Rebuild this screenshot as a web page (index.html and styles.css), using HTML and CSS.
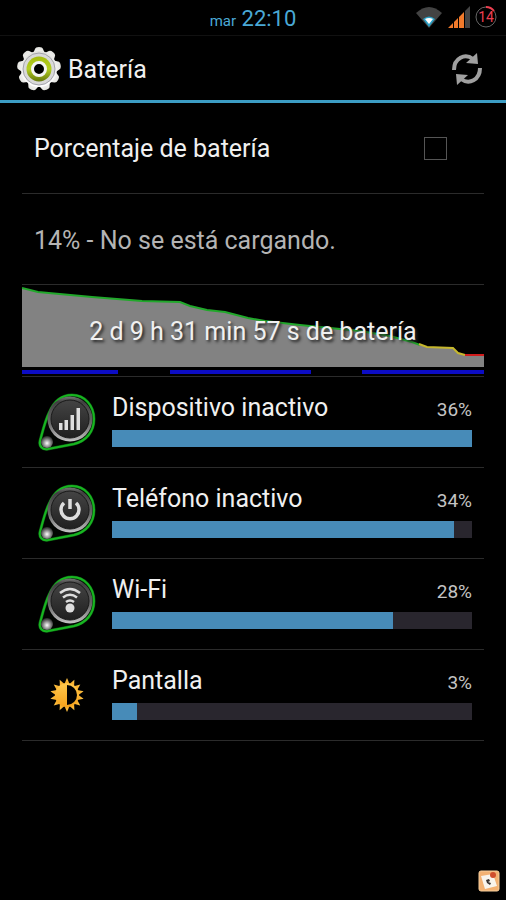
FILE: index.html
```html
<!DOCTYPE html>
<html lang="es">
<head>
<meta charset="utf-8">
<meta name="viewport" content="width=device-width, initial-scale=1">
<title>Batería</title>
<link rel="stylesheet" href="styles.css">
</head>
<body>
<svg class="defs" aria-hidden="true">
  <defs>
    <linearGradient id="rim" x1="0" y1="0" x2="0" y2="1">
      <stop offset="0" stop-color="#777"/><stop offset=".12" stop-color="#404040"/>
      <stop offset=".6" stop-color="#6a6a6a"/><stop offset="1" stop-color="#c4c4c4"/>
    </linearGradient>
    <linearGradient id="face" x1="0" y1="0" x2="0" y2="1">
      <stop offset="0" stop-color="#444"/><stop offset="1" stop-color="#202020"/>
    </linearGradient>
    <radialGradient id="ball" cx=".5" cy=".6" r=".55">
      <stop offset="0" stop-color="#fff"/><stop offset=".5" stop-color="#999"/><stop offset="1" stop-color="#333"/>
    </radialGradient>
    <linearGradient id="metal" x1="0" y1="0" x2="0" y2="1">
      <stop offset="0" stop-color="#e2e2de"/><stop offset="1" stop-color="#fff"/>
    </linearGradient>
    <linearGradient id="lime" x1="0" y1="0" x2="0" y2="1">
      <stop offset="0" stop-color="#a6bd12"/><stop offset=".5" stop-color="#b4cf22"/><stop offset="1" stop-color="#66780c"/>
    </linearGradient>
    <linearGradient id="gold" x1="0" y1="0" x2="0" y2="1">
      <stop offset="0" stop-color="#ffc84c"/><stop offset="1" stop-color="#f5a21c"/>
    </linearGradient>
    <g id="badge">
      <path d="M11 20C16 8 24 2 34 2C47 2 56 13 56 26C56 39 48 48 36 51L10 56C4 57 1 53 2 48C5 37 7 28 11 20Z" fill="#020502" stroke="#0b5d10" stroke-width="3"/>
      <path d="M11 20C16 8 24 2 34 2C47 2 56 13 56 26C56 39 48 48 36 51L10 56C4 57 1 53 2 48C5 37 7 28 11 20Z" fill="none" stroke="#18b521" stroke-width="2"/>
      <circle cx="32" cy="26" r="22.5" fill="url(#rim)"/>
      <circle cx="32" cy="26" r="19" fill="url(#face)" stroke="#191919"/>
      <circle cx="9" cy="49" r="6" fill="url(#ball)"/>
    </g>
    <path id="tooth" d="M15 9L18 2Q18.500 0 22 0Q25.500 0 26 2L29 9Z"/>
    <path id="ray" d="M14 7L17 0L20 7Z"/>
  </defs>
</svg>

<div class="status">
  <div class="clock"><span class="day">mar</span> <time>22:10</time></div>
  <div class="status-icons">
    <svg width="28" height="22" viewBox="0 0 28 22" aria-label="Wi-Fi">
      <path d="M1 7Q14 -5 27 7L14 22Z" fill="#434343"/>
      <path d="M8 13Q14 8 20 13L14 21Z" fill="#2a9fc4"/>
      <path d="M10 13Q14 11 18 13L14 18Z" fill="#fff"/>
    </svg>
    <svg width="22" height="22" viewBox="0 0 22 22" aria-label="Señal">
      <path d="M0 22L5 17V22ZM6 16L10 12V22H6ZM11 11L16 6V22H11Z" fill="#f17a2b"/>
      <path d="M17 5L22 0V22H17Z" fill="#444"/>
    </svg>
    <svg class="level" width="22" height="22" viewBox="0 0 22 22" aria-label="14 %">
      <circle cx="11" cy="11" r="10" fill="none" stroke="#656565"/>
      <path d="M11 1A10 10 0 0 1 19 5" fill="none" stroke="#ed3f50" stroke-width="2"/>
      <text x="11" y="16" text-anchor="middle">14</text>
    </svg>
  </div>
</div>

<header class="bar">
  <svg width="44" height="44" viewBox="0 0 44 44" aria-hidden="true">
    <g fill="url(#metal)">
      <use href="#tooth"/><use href="#tooth" transform="rotate(40 22 22)"/><use href="#tooth" transform="rotate(80 22 22)"/>
      <use href="#tooth" transform="rotate(120 22 22)"/><use href="#tooth" transform="rotate(160 22 22)"/><use href="#tooth" transform="rotate(200 22 22)"/>
      <use href="#tooth" transform="rotate(240 22 22)"/><use href="#tooth" transform="rotate(280 22 22)"/><use href="#tooth" transform="rotate(320 22 22)"/>
      <circle cx="22" cy="22" r="18"/>
    </g>
    <circle cx="22" cy="22" r="16" fill="#d9d9d9" stroke="#a3a3aa"/>
    <circle cx="22" cy="22" r="12.5" fill="url(#lime)"/>
    <circle cx="22" cy="22" r="6.5" fill="#000" stroke="#f4f4f4" stroke-width="3"/>
  </svg>
  <h1>Batería</h1>
  <button class="refresh" type="button" aria-label="Actualizar">
    <svg width="32" height="34" viewBox="0 0 32 34" aria-hidden="true">
      <g fill="none" stroke="#a0a0a0" stroke-width="4">
        <path d="M3 18C3 6 14 1 22 7"/>
        <path d="M29 16C29 28 18 33 10 27"/>
      </g>
      <path d="M26 1L27 12L15 11ZM6 33L5 22L17 23Z" fill="#a0a0a0"/>
    </svg>
  </button>
</header>

<main>
  <label class="row setting" for="percent">Porcentaje de batería <input id="percent" type="checkbox"></label>
  <p class="row state">14% - No se está cargando.</p>

  <section class="row history">
    <svg viewBox="0 0 462 91" preserveAspectRatio="none" aria-hidden="true">
      <path d="M0 3L16 7L70 12L120 16L158 17L168 21L185 25L203 27L226 33L243 36L278 40L338 46L368 51L390 57L398 60L405 62L431 63L436 68L443 70H462V82H0Z" fill="#828282"/>
      <g fill="none" stroke-width="2">
        <path d="M0 3L16 7L70 12L120 16L158 17L168 21L185 25L203 27L226 33L243 36L278 40L338 46L368 51L390 57L398 60" stroke="#21a82b"/>
        <path d="M397 59L405 62L431 63L436 68L443 70" stroke="#c6b72c"/>
        <path d="M443 70H462" stroke="#d01c1c"/>
      </g>
      <path d="M0 85H96V89H0ZM148 85H289V89H148ZM340 85H462V89H340Z" fill="#0c0cc4"/>
    </svg>
    <p>2 d 9 h 31 min 57 s de batería</p>
  </section>

  <ul>
    <li class="row usage">
      <svg width="58" height="58" viewBox="0 0 58 58" aria-hidden="true">
        <use href="#badge"/>
        <path d="M21 30H24.500V37H21ZM26.500 27H30V37H26.500ZM32.500 22H36V37H32.500ZM38.500 15H42V37H38.500Z" fill="#dedede"/>
      </svg>
      <div class="info">
        <div class="line"><span>Dispositivo inactivo</span><span class="pct">36%</span></div>
        <div class="track"><div class="fill" style="width:100%"></div></div>
      </div>
    </li>
    <li class="row usage">
      <svg width="58" height="58" viewBox="0 0 58 58" aria-hidden="true">
        <use href="#badge"/>
        <path d="M26 19A9 9 0 1 0 38 19M32 15V25" fill="none" stroke="#dedede" stroke-width="3.500"/>
      </svg>
      <div class="info">
        <div class="line"><span>Teléfono inactivo</span><span class="pct">34%</span></div>
        <div class="track"><div class="fill" style="width:95%"></div></div>
      </div>
    </li>
    <li class="row usage">
      <svg width="58" height="58" viewBox="0 0 58 58" aria-hidden="true">
        <use href="#badge"/>
        <path d="M22 18Q32 10 42 18M25 22.500Q32 17 39 22.500M28 27Q32 24 36 27" fill="none" stroke="#dedede" stroke-width="2.500"/>
        <circle cx="32" cy="33" r="4.500" fill="#dedede"/>
      </svg>
      <div class="info">
        <div class="line"><span>Wi-Fi</span><span class="pct">28%</span></div>
        <div class="track"><div class="fill" style="width:78%"></div></div>
      </div>
    </li>
    <li class="row usage">
      <svg width="58" height="58" viewBox="-12 -12 58 58" aria-hidden="true">
        <g fill="url(#gold)">
          <use href="#ray"/><use href="#ray" transform="rotate(25.714 17 17)"/><use href="#ray" transform="rotate(51.429 17 17)"/>
          <use href="#ray" transform="rotate(77.143 17 17)"/><use href="#ray" transform="rotate(102.857 17 17)"/><use href="#ray" transform="rotate(128.571 17 17)"/>
          <use href="#ray" transform="rotate(154.286 17 17)"/><use href="#ray" transform="rotate(180 17 17)"/><use href="#ray" transform="rotate(205.714 17 17)"/>
          <use href="#ray" transform="rotate(231.429 17 17)"/><use href="#ray" transform="rotate(257.143 17 17)"/><use href="#ray" transform="rotate(282.857 17 17)"/>
          <use href="#ray" transform="rotate(308.571 17 17)"/><use href="#ray" transform="rotate(334.286 17 17)"/>
          <circle cx="17" cy="17" r="12"/>
        </g>
        <path d="M17 7A10 10 0 0 1 17 27Z" fill="#000"/>
      </svg>
      <div class="info">
        <div class="line"><span>Pantalla</span><span class="pct">3%</span></div>
        <div class="track"><div class="fill" style="width:7%"></div></div>
      </div>
    </li>
  </ul>
</main>

<footer>
  <svg width="22" height="22" viewBox="0 0 22 22" aria-hidden="true">
    <rect x="1" y="1" width="20" height="20" rx="2" fill="#f2b172" stroke="#f7cf9d"/>
    <path d="M3 6L15 4L19 16L7 19Z" fill="#f8f4ec"/>
    <path d="M8 10L11 9L12 11L10 12L13 13L12 15L9 13Z" fill="#34302e"/>
    <circle cx="15" cy="5" r="3" fill="#cf4e2d"/>
  </svg>
</footer>
</body>
</html>
```
FILE: styles.css
```css
* { box-sizing: border-box; }

body {
  margin: 0;
  min-height: 100vh;
  display: flex;
  flex-direction: column;
  background: #000;
  color: #f0f0f0;
  font-family: Roboto, "Liberation Sans", sans-serif;
  font-size: 25px;
  line-height: 32px;
}

h1, p, ul { margin: 0; padding: 0; font-weight: 400; list-style: none; }
svg { display: block; flex: none; }
.defs { position: absolute; width: 0; height: 0; }

.status {
  display: grid;
  grid-template-columns: 1fr auto 1fr;
  align-items: center;
  height: 36px;
  padding: 0 9px;
  border-bottom: 1px solid #111;
}
.clock { grid-column: 2; padding-top: 3px; color: #4aa9d6; font-size: 22px; }
.day { font-size: 15px; }
.status-icons { display: flex; justify-content: flex-end; gap: 5px; padding-bottom: 3px; }
.level text { font-size: 14px; fill: #ed3f50; }

.bar {
  display: flex;
  align-items: center;
  gap: 7px;
  height: 67px;
  padding: 2px 23px 0 17px;
  border-bottom: 3px solid #3c9dc4;
}
.bar h1 { flex: 1; padding-top: 2px; font-size: 25px; line-height: 32px; }
.refresh { padding: 0; border: 0; background: none; }

main { flex: 1; padding: 0 22px; }
.row {
  display: flex;
  align-items: center;
  min-height: 91px;
  border-bottom: 1px solid #2b2b2b;
}
.setting { justify-content: space-between; padding: 2px 37px 0 12px; }
.setting input {
  appearance: none;
  width: 23px;
  height: 23px;
  margin: 0 0 2px;
  border: 1px solid #555;
}
.state { padding: 3px 12px 0; color: #b4b4b4; }

.history { display: grid; min-height: 92px; }
.history > * { grid-area: 1 / 1; }
.history svg { width: 100%; height: 91px; }
.history p { padding-top: 2px; text-align: center; text-shadow: 2px 2px 3px #222; }

.usage { gap: 16px; padding: 0 12px 0 16px; }
.info { flex: 1; padding-bottom: 6px; }
.line { display: flex; justify-content: space-between; align-items: baseline; margin-bottom: 4px; }
.pct { font-size: 19px; color: #c4c4c4; }
.track { height: 17px; background: #29262e; }
.fill { height: 100%; background: #478bb8; }

footer { display: flex; justify-content: flex-end; padding: 8px 6px; }
```
